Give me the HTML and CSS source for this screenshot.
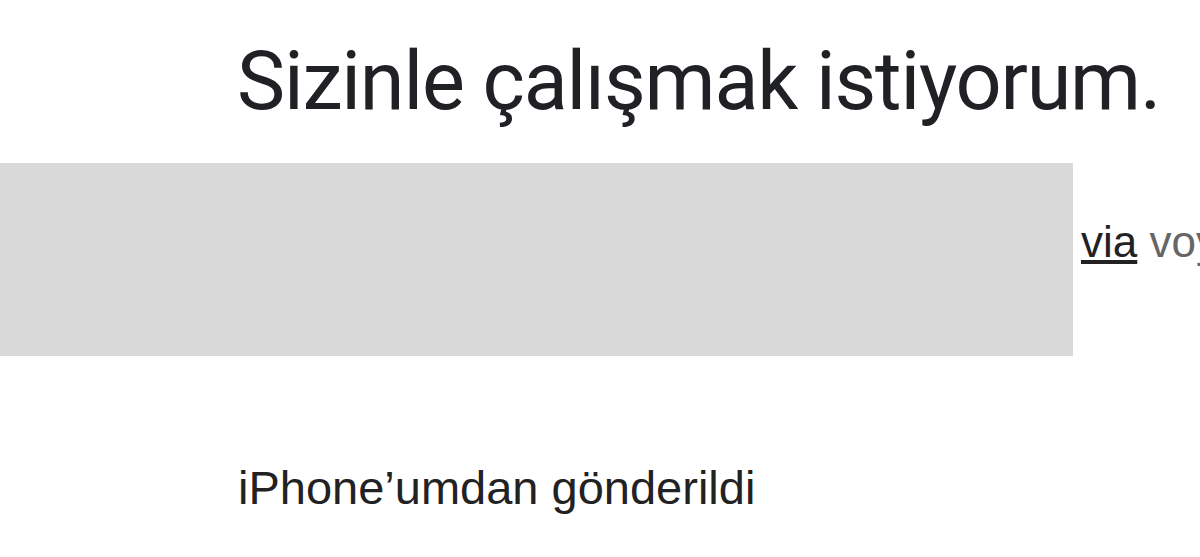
FILE: index.html
```html
<!DOCTYPE html>
<html lang="tr">
<head>
<meta charset="utf-8">
<link rel="stylesheet" href="styles.css">
</head>
<body>
<div class="page">
  <h1 class="title">Sizinle çalışmak istiyorum.</h1>
  <div class="row">
    <div class="placeholder"></div>
    <div class="via"><span class="via-link">via</span> voyager</div>
  </div>
  <p class="sig">iPhone’umdan gönderildi</p>
</div>
</body>
</html>
```
FILE: styles.css
```css
html, body {
  margin: 0;
  padding: 0;
  background: #ffffff;
}
.page {
  width: 1200px;
  height: 557px;
  overflow: hidden;
}
.title {
  margin: 0;
  padding: 32px 0 0 237px;
  height: 100px;
  font-family: Roboto, "Open Sans", sans-serif;
  font-weight: 400;
  font-size: 81px;
  line-height: 100px;
  letter-spacing: -1.2px;
  color: #202124;
  white-space: nowrap;
}
.row {
  display: flex;
  align-items: flex-start;
  margin-top: 31px;
  white-space: nowrap;
}
.placeholder {
  flex: 0 0 1073px;
  height: 193px;
  background: #d9d9d9;
}
.via {
  margin-left: 8px;
  padding-top: 54px;
  font-family: "Liberation Sans", Arial, sans-serif;
  font-size: 44px;
  line-height: 50px;
  color: #666666;
}
.via-link {
  color: #222222;
  text-decoration: underline;
}
.sig {
  margin: 104px 0 0 238px;
  font-family: "Liberation Sans", Arial, sans-serif;
  font-size: 47px;
  line-height: 56px;
  color: #222222;
}
```
